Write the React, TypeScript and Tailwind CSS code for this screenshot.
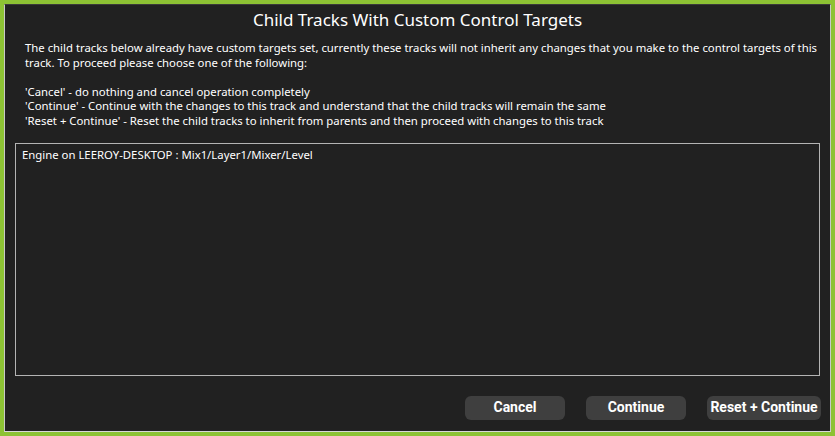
export default function App() {
  const buttons = [
    { label: 'Cancel', w: 'w-[100px]' },
    { label: 'Continue', w: 'w-[100px]' },
    { label: 'Reset + Continue', w: 'w-[114px]' },
  ];

  return (
    <div className="h-[436px] w-[835px] bg-[#8dc234] p-[4px]">
      <div className="flex h-full flex-col border-x border-b border-t border-x-[#c8c8c8] border-b-[#d8d8d8] border-t-[#3a3a3a] bg-[#212121] font-['Noto_Sans',sans-serif] text-white">
        <h1 className="pt-[3px] text-center text-[17px] leading-[24px]">
          Child Tracks With Custom Control Targets
        </h1>

        <div className="mt-[9px] pl-[20px] pr-[8px] text-[11.35px] leading-[14.6px]">
          <p>
            The child tracks below already have custom targets set, currently these tracks will not inherit any
            changes that you make to the control targets of this
            <br />
            track. To proceed please choose one of the following:
          </p>
          <p className="mt-[14.6px]">'Cancel' - do nothing and cancel operation completely</p>
          <p>'Continue' - Continue with the changes to this track and understand that the child tracks will remain the same</p>
          <p>'Reset + Continue' - Reset the child tracks to inherit from parents and then proceed with changes to this track</p>
        </div>

        {/* target list */}
        <div className="mx-[10px] mt-[14px] h-[233px] border border-[#b4b4b4] px-[6px] py-[3px] text-[11.35px] leading-[16px]">
          Engine on LEEROY-DESKTOP : Mix1/Layer1/Mixer/Level
        </div>

        <div className="mt-[20px] flex justify-end gap-[21px] pr-[9px]">
          {buttons.map((b) => (
            <button
              key={b.label}
              className={`${b.w} h-[24px] rounded-[6px] bg-[#3f3f3f] font-['Roboto',sans-serif] text-[14px] font-bold text-white`}
            >
              {b.label}
            </button>
          ))}
        </div>
      </div>
    </div>
  );
}
